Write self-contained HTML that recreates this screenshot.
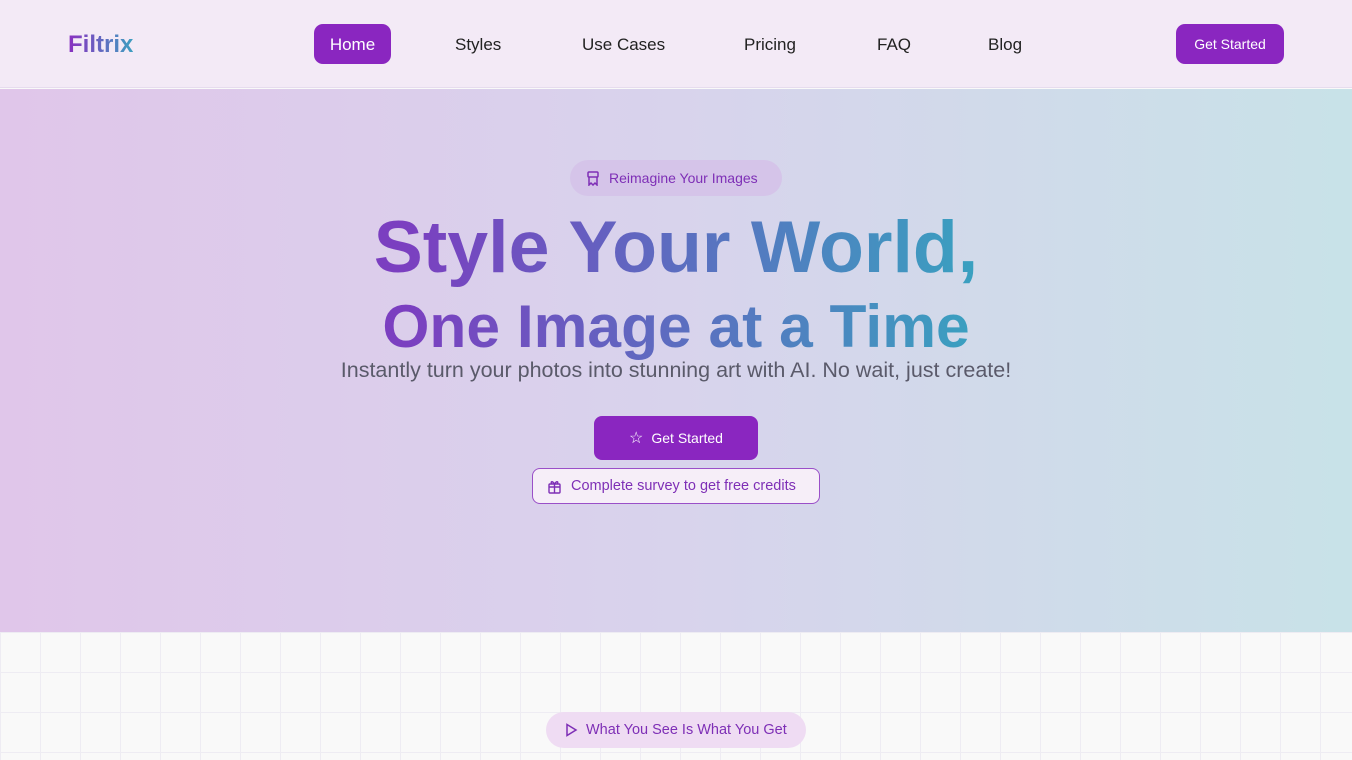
<!DOCTYPE html>
<html><head><meta charset="utf-8"><style>
*{margin:0;padding:0;box-sizing:border-box}
body{width:1352px;height:760px;overflow:hidden;font-family:"Liberation Sans",sans-serif;background:#f9f9f9}
.nav{position:absolute;top:0;left:0;width:1352px;height:88px;background:#f3eaf6;border-bottom:1px solid #e6dcee}
.logo{position:absolute;left:68px;top:31px;font-size:24px;font-weight:bold;background:linear-gradient(90deg,#8a2fc0,#3d9fc0);-webkit-background-clip:text;color:transparent}
.nl{position:absolute;top:24px;height:40px;line-height:41px;font-size:17px;color:#222}
.home{left:314px;width:77px;background:#8a26c0;color:#fff;border-radius:9px;text-align:center}
.gs{position:absolute;left:1176px;top:24px;width:108px;height:40px;background:#8a26c0;color:#fff;border-radius:9px;font-size:14px;text-align:center;line-height:40px}
.hero{position:absolute;top:89px;left:0;width:1352px;height:543px;background:linear-gradient(90deg,#e0c6ea,#d8d3ec 50%,#c8e2e8)}
.grid{position:absolute;top:632px;left:0;width:1352px;height:128px;background-image:linear-gradient(#eeecf3 1px,transparent 1px),linear-gradient(90deg,#eeecf3 1px,transparent 1px);background-size:40px 40px;background-position:0 0}
.pill{position:absolute;left:570px;top:160px;width:212px;height:36px;border-radius:18px;background:#d5c4e9;color:#7e2fb6;font-size:14px;line-height:36px}
.h1{position:absolute;left:0;width:1352px;text-align:center;font-weight:bold;background:linear-gradient(90deg,#7b3fc0 30%,#3aa0c0 72%);-webkit-background-clip:text;color:transparent}
.sub{position:absolute;top:358px;width:1352px;text-align:center;font-size:21.5px;color:#5a5a6a}
.cta{position:absolute;left:594px;top:416px;width:164px;height:44px;background:#8a26c0;border-radius:8px;color:#fff;font-size:14px;line-height:44px;text-align:center}
.sv{position:absolute;left:532px;top:468px;width:288px;height:36px;border:1px solid #9a4fc8;border-radius:8px;background:#f6eef8;color:#7e2fb6;font-size:14.5px;line-height:35px}
.p2{position:absolute;left:546px;top:712px;width:260px;height:36px;border-radius:18px;background:#efdcf3;color:#7e2fb6;font-size:14.5px;line-height:37px}
</style></head><body>
<div class="nav">
<div class="logo">Filtrix</div>
<div class="nl home">Home</div>
<div class="nl" style="left:455px">Styles</div>
<div class="nl" style="left:582px">Use Cases</div>
<div class="nl" style="left:744px">Pricing</div>
<div class="nl" style="left:877px">FAQ</div>
<div class="nl" style="left:988px">Blog</div>
<div class="gs">Get Started</div>
</div>
<div class="hero"></div>
<div class="grid"></div>
<div class="pill"><svg style="position:absolute;left:16px;top:11px" width="14" height="15" viewBox="0 0 14 15" fill="none" stroke="#7e2fb6" stroke-width="1.5"><rect x="2" y="1" width="10" height="5" rx="1"/><path d="M3 6v8l2-2 2 2 2-2 2 2V6"/></svg><span style="position:absolute;left:39px">Reimagine Your Images</span></div>
<div class="h1" style="top:207px;font-size:73.5px;line-height:80px">Style Your World,</div>
<div class="h1" style="top:292px;font-size:60.5px;line-height:68px">One Image at a Time</div>
<div class="sub">Instantly turn your photos into stunning art with AI. No wait, just create!</div>
<div class="cta"><span style="font-size:16px;margin-right:8px">☆</span>Get Started</div>
<div class="sv"><svg style="position:absolute;left:14px;top:10px" width="15" height="15" viewBox="0 0 15 15" fill="none" stroke="#7e2fb6" stroke-width="1.4"><rect x="2" y="5" width="11" height="9" rx="1"/><path d="M2 8h11M7.5 5v9M7.5 5C5 1 3 3 5 5M7.5 5C10 1 12 3 10 5"/></svg><span style="position:absolute;left:38px">Complete survey to get free credits</span></div>
<div class="p2"><svg style="position:absolute;left:18px;top:11px" width="14" height="14" viewBox="0 0 14 14" fill="none" stroke="#7e2fb6" stroke-width="1.5"><path d="M3 1.5l9 5.5-9 5.5z"/></svg><span style="position:absolute;left:40px">What You See Is What You Get</span></div>
</body></html>
